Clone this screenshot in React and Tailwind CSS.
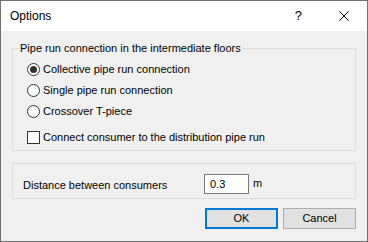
import { useState } from "react";

const font = { fontFamily: '"Liberation Sans", Arial, sans-serif' };

function Radio({ checked, label, onClick }) {
  return (
    <div className="flex h-[21px] items-center pl-[14px]" onClick={onClick}>
      <span className="flex h-[13px] w-[13px] items-center justify-center rounded-full border border-[#333] bg-white">
        {checked && <span className="h-[7px] w-[7px] rounded-full bg-[#333]" />}
      </span>
      <span className="ml-[3px]">{label}</span>
    </div>
  );
}

export default function App() {
  const [mode, setMode] = useState(0);
  const [connect, setConnect] = useState(false);
  const options = ["Collective pipe run connection", "Single pipe run connection", "Crossover T-piece"];

  return (
    <div
      className="flex h-[242px] w-[368px] flex-col border border-[#707070] text-[11px] text-black"
      style={font}
    >
      <div className="flex h-[30px] items-center bg-white pl-[9px]">
        <span className="text-[12px]">Options</span>
        <span className="ml-auto mr-[37px] text-[13px]">?</span>
        <svg width="10" height="10" viewBox="0 0 10 10" className="mr-[18px]">
          <path d="M0.5 0.5 L9.5 9.5 M9.5 0.5 L0.5 9.5" stroke="#000" strokeWidth="1" />
        </svg>
      </div>

      <div className="flex flex-1 flex-col bg-[#f0f0f0] px-[11px]">
        <div className="relative mt-[17px] h-[103px] border border-[#dcdcdc] pt-[10px]">
          <span className="absolute -top-[8px] left-[6px] bg-[#f0f0f0] px-[1px] leading-[14px]">
            Pipe run connection in the intermediate floors
          </span>
          {options.map((o, i) => (
            <Radio key={o} label={o} checked={mode === i} onClick={() => setMode(i)} />
          ))}
          <div className="mt-[5px] flex h-[21px] items-center pl-[14px]" onClick={() => setConnect(!connect)}>
            <span className="flex h-[13px] w-[13px] items-center justify-center border border-[#333] bg-white text-[10px] leading-none">
              {connect ? "✓" : ""}
            </span>
            <span className="ml-[3px]">Connect consumer to the distribution pipe run</span>
          </div>
        </div>

        <div className="mt-[12px] flex h-[36px] items-start border border-[#dcdcdc] pl-[10px] pt-[10px]">
          <span className="mt-[3px] w-[181px]">Distance between consumers</span>
          <input
            defaultValue="0.3"
            className="h-[20px] w-[45px] border border-[#7a7a7a] bg-white px-[5px] text-[11px] outline-none"
            style={font}
          />
          <span className="ml-[4px] mt-[1px]">m</span>
        </div>

        <div className="mt-[9px] flex justify-end gap-[5px]">
          <button className="h-[21px] w-[73px] border-2 border-[#0078d7] bg-[#e1e1e1]">OK</button>
          <button className="h-[21px] w-[73px] border border-[#adadad] bg-[#e1e1e1]">Cancel</button>
        </div>
      </div>
    </div>
  );
}
